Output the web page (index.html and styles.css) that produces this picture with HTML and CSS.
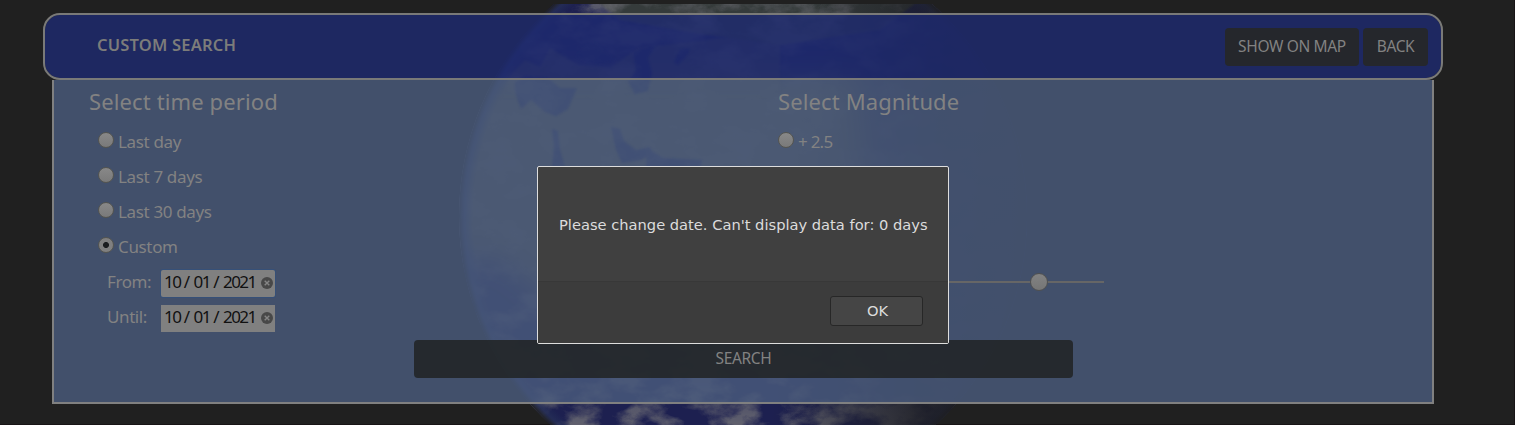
FILE: index.html
```html
<!DOCTYPE html>
<html lang="en">
<head>
<meta charset="utf-8">
<title>Custom search</title>
<link rel="stylesheet" href="styles.css">
</head>
<body>
<svg class="earth" viewBox="0 0 1515 425" aria-hidden="true">
  <defs>
    <clipPath id="disc"><path d="M440 4H1040V425H440Z"/></clipPath>
    <clipPath id="globe"><circle cx="743" cy="216" r="284"/></clipPath>
    <radialGradient id="rim" gradientUnits="userSpaceOnUse" cx="743" cy="216" r="284">
      <stop offset=".95" stop-color="#243058" stop-opacity="0"/>
      <stop offset=".98" stop-color="#263058" stop-opacity=".7"/>
      <stop offset="1" stop-color="#202020"/>
    </radialGradient>
    <linearGradient id="night" gradientUnits="userSpaceOnUse" x1="790" y1="195" x2="1027" y2="215">
      <stop offset="0" stop-color="#1d1e24" stop-opacity="0"/>
      <stop offset=".6" stop-color="#1d1e24" stop-opacity=".82"/>
      <stop offset="1" stop-color="#1e1e21"/>
    </linearGradient>
    <linearGradient id="fade" x1="0" y1="0" x2="0" y2="1">
      <stop offset="0" stop-color="#ccc"/><stop offset=".06" stop-color="#666"/><stop offset=".25" stop-color="#333"/><stop offset=".5" stop-color="#444"/><stop offset=".88" stop-color="#777"/><stop offset="1" stop-color="#ddd"/>
    </linearGradient>
    <filter id="clouds" x="0" y="0" width="1" height="1" color-interpolation-filters="sRGB">
      <feTurbulence type="fractalNoise" baseFrequency=".025 .04" numOctaves="7" seed="21"/>
      <feColorMatrix values="0 0 0 0 .42 0 0 0 0 .42 0 0 0 0 .45 3.4 0 0 0 -1.4"/>
    </filter>
    <filter id="soft"><feGaussianBlur stdDeviation=".8"/></filter>
    <filter id="haze"><feGaussianBlur stdDeviation="14"/></filter>
    <mask id="cloudmask"><path d="M440 4H1040V425H440Z" fill="url(#fade)"/></mask>
  </defs>
  <g clip-path="url(#disc)">
    <g clip-path="url(#globe)">
      <path fill="#1d2050" d="M440 0H1040V425H440Z"/>
      <path class="land" filter="url(#haze)" d="M430 75H860L880 250L740 300L560 310L500 260L430 260Z"/>
      <path class="land" filter="url(#soft)" opacity=".6" d="M510 76L525 60L540 67L550 48L578 65L610 68L638 48L690 42L780 30V100H500Z"/>
      <path class="steppe" d="M595 0H920L880 30L780 45L700 34L620 20Z" filter="url(#soft)"/>
      <g class="sea" filter="url(#soft)">
        <path d="M515 90L518 101L521 109L531 100L545 112L556 116L568 109L577 88L560 88L548 78L525 76L515 82Z"/>
        <path d="M575 57L584 46L596 42L605 51L616 59L603 64L585 62Z"/>
        <path d="M633 52L641 48L656 45L648 58L652 73L648 91L635 94L628 82L636 70Z"/>
        <path d="M552 129L558 131L560 150L565 167H552L554 146Z"/>
        <path d="M611 127L620 129L624 141L636 150L650 147L653 153L641 160L622 163L616 150Z"/>
        <path d="M647 148L663 158L702 160L700 170H646Z"/>
        <path d="M674 62L680 49L690 48L688 54L678 65Z"/>
      </g>
      <path fill="#fff" filter="url(#clouds)" mask="url(#cloudmask)" d="M440 0H1040V425H440Z"/>
      <circle cx="743" cy="216" r="284" fill="url(#rim)"/>
      <path fill="url(#night)" d="M440 0H1040V425H440Z"/>
    </g>
  </g>
</svg>

<main class="page">
  <header class="bar">
    <h1 class="title">CUSTOM SEARCH</h1>
    <nav class="actions">
      <button class="btn btn-map"><span>SHOW ON MAP</span></button>
      <button class="btn btn-back"><span>BACK</span></button>
    </nav>
  </header>

  <section class="panel">
    <div class="columns">
      <div class="period">
        <h2 class="heading">Select time period</h2>
        <label class="option"><i class="radio"></i><span>Last day</span></label>
        <label class="option"><i class="radio"></i><span>Last 7 days</span></label>
        <label class="option"><i class="radio"></i><span>Last 30 days</span></label>
        <label class="option"><i class="radio checked"></i><span>Custom</span></label>
        <div class="date-row">
          <span class="date-label">From:</span>
          <div class="date focused"><span>10</span><b>/</b><span>01</span><b>/</b><span>2021</span>
            <svg class="clear" viewBox="0 0 12 12"><circle cx="6" cy="6" r="6"/><path d="M3.7 3.7L8.3 8.3M8.3 3.7L3.7 8.3"/></svg></div>
        </div>
        <div class="date-row">
          <span class="date-label">Until:</span>
          <div class="date"><span>10</span><b>/</b><span>01</span><b>/</b><span>2021</span>
            <svg class="clear" viewBox="0 0 12 12"><circle cx="6" cy="6" r="6"/><path d="M3.7 3.7L8.3 8.3M8.3 3.7L3.7 8.3"/></svg></div>
        </div>
      </div>
      <div class="magnitude">
        <h2 class="heading">Select Magnitude</h2>
        <label class="option"><i class="radio"></i><span class="value">+ 2.5</span></label>
        <div class="slider"><i class="thumb"></i></div>
      </div>
    </div>
    <button class="btn btn-search"><span>SEARCH</span></button>
  </section>
</main>

<div class="dialog" role="alertdialog">
  <p class="message">Please change date. Can't display data for: 0 days</p>
  <div class="footer"><button class="ok">OK</button></div>
</div>
</body>
</html>
```
FILE: styles.css
```css
* { box-sizing: border-box; }
body {
  margin: 0;
  height: 425px;
  overflow: hidden;
  background: #202020;
  border-right: 1px solid #181416;
  border-bottom: 1px solid #181416;
  color: #828282;
  font: 17px/26px "Noto Sans", sans-serif;
}
button { margin: 0; border: 0; padding: 0; color: inherit; font: inherit; }
h1, h2, p { margin: 0; font-weight: 400; }

.earth { position: absolute; left: 0; top: 0; width: 1515px; height: 425px; }
.land { fill: #4c4b45; }
.steppe { fill: #343b3a; }
.sea { fill: #1c2150; }

.page { position: relative; width: 1400px; margin-left: 43px; padding-top: 13px; }
.bar {
  display: flex;
  align-items: center;
  justify-content: space-between;
  height: 67px;
  padding: 0 13px 0 52px;
  border: 2px solid #7a7a78;
  border-radius: 17px;
  background: rgba(30, 42, 114, .8);
  background-clip: padding-box;
}
.title { font-size: 16.5px; font-weight: 600; letter-spacing: .2px; color: #7c7c7a; line-height: 24px; white-space: nowrap; padding-bottom: 3px; }
.actions { display: flex; gap: 4px; }
.btn {
  display: flex;
  align-items: center;
  justify-content: center;
  height: 38px;
  border-radius: 4px;
  background: rgba(37, 40, 42, .96);
  font-size: 15.5px;
  letter-spacing: -.35px;
  line-height: 24px;
  white-space: nowrap;
  padding-bottom: 2px;
}
.btn-map { width: 134px; }
.btn-back { width: 65px; }

.panel {
  width: 1382px;
  height: 324px;
  margin-left: 9px;
  border: 2px solid #808080;
  border-top: 0;
  background: rgba(75, 92, 126, .8);
  background-clip: padding-box;
}
.columns { display: flex; height: 260px; padding-top: 4px; }
.period { width: 689px; padding-left: 35px; }
.magnitude { padding-left: 35px; }
.heading { height: 40px; font-size: 22px; letter-spacing: .12px; line-height: 35px; white-space: nowrap; }
.option { display: flex; align-items: center; height: 35px; padding-left: 9px; letter-spacing: -.35px; white-space: nowrap; }
.magnitude .option { padding-left: 0; }
.value { letter-spacing: -.75px; }
.radio {
  width: 16px;
  height: 16px;
  margin: 0 4px 4px 0;
  border: 1px solid #555550;
  border-radius: 50%;
  background: linear-gradient(#888, #7a7a7a);
}
.checked { background: radial-gradient(circle, #1c1e20 2.6px, #808080 3.4px); }
.date-row { display: flex; align-items: center; height: 35px; padding: 1px 0 0 18px; }
.date-label { width: 54px; letter-spacing: -.4px; }
.date {
  display: flex;
  align-items: center;
  width: 114px;
  height: 27px;
  margin-top: 2px;
  padding: 0 0 2px 3px;
  background: #808080;
  color: #111;
  font-size: 17px;
}
.date b { width: 13px; text-align: center; font-weight: 400; }
.date span { letter-spacing: -1.5px; }
.focused { border-radius: 2px; box-shadow: 0 0 0 1px #365078; }
.clear { width: 12px; height: 12px; margin: 2px 2px 0 auto; fill: #484848; stroke: #858585; stroke-width: 1.4; }
.clear circle { stroke: none; }
.slider { display: flex; align-items: center; width: 326px; height: 18px; margin-top: 114px; background: linear-gradient(#666, #666) center / 100% 2px no-repeat; }
.thumb { width: 18px; height: 18px; margin-left: 252px; border: 1px solid #505050; border-radius: 50%; background: linear-gradient(#828282, #767676); }
.btn-search { width: 659px; margin-left: 360px; background: rgba(36, 39, 42, .93); }

.dialog {
  position: absolute;
  left: 537px;
  top: 166px;
  width: 412px;
  height: 178px;
  border: 1px solid #dedede;
  border-radius: 2px;
  background: #404040;
  color: #dcdcdc;
  font: 14.67px/20px "DejaVu Sans", sans-serif;
}
.message { height: 114px; padding: 48px 0 0 21px; white-space: nowrap; }
.footer { display: flex; justify-content: flex-end; height: 62px; padding: 14px 25px 0 0; border-top: 1px solid #383838; background: #3c3c3c; }
.ok { width: 93px; height: 30px; padding-left: 2px; border: 1px solid #272727; border-radius: 3px; background: #454545; }
```
